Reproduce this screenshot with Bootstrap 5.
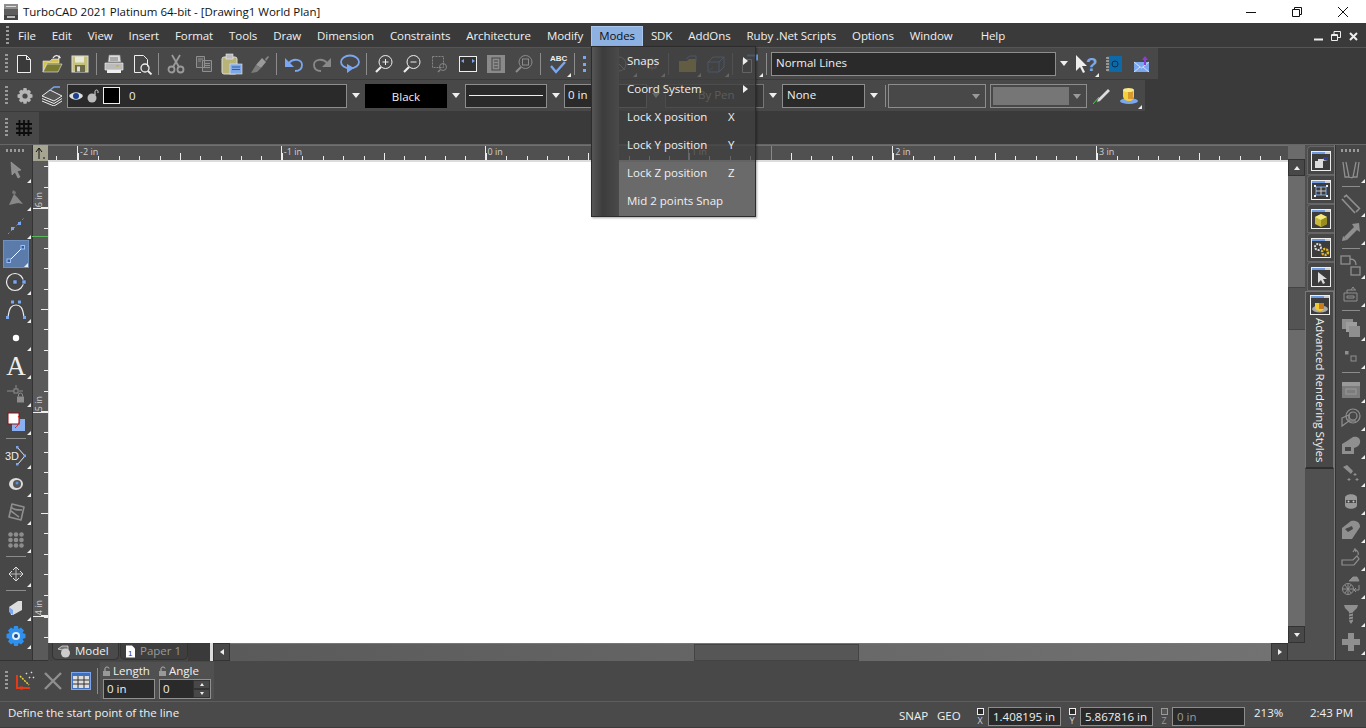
<!DOCTYPE html>
<html lang="en">
<head>
<meta charset="UTF-8" />
<meta name="viewport" content="width=device-width, initial-scale=1" />
<title>TurboCAD 2021 Platinum 64-bit</title>
<link href="https://cdn.jsdelivr.net/npm/bootstrap@5.3.3/dist/css/bootstrap.min.css" rel="stylesheet" />
<style>
  html, body { height: 728px; overflow: hidden; }
  body { width: 1366px; background: #3a3a3a; color: #f0f0f0; font: 11.5px/1.2 "Open Sans", "Noto Sans", sans-serif; }
  svg { display: block; }

  /* window chrome */
  .tc-title { height: 23px; background: #fff; color: #111; padding-left: 4px; }
  .tc-title span { margin: 1px 0 0 5px; letter-spacing: -.03px; }
  .tc-winbtn { width: 46px; height: 23px; }
  .tc-menubar { height: 24px; background: #3a3a3a; padding: 2px 0 0 6px; }
  .tc-menuitem { padding: 0 8px; height: 20px; line-height: 19px; letter-spacing: -.1px; }
  .tc-menuitem.on { background: #8db2e2; color: #111; border: 1px solid #a9c6ec; border-bottom: 0; line-height: 18px; padding: 0 7px; }
  .tc-menuitem.tc-help { margin-left: 12px; }
  .tc-grip { width: 3px; height: 20px; margin: 0 2px 0 5px; flex: none; background: repeating-linear-gradient(#9a9a9a 0 2px, transparent 2px 4px); }
  .tc-menubar .tc-grip { margin: 0 1px 0 0; }

  /* toolbars */
  .tc-rows { height: 97px; border-top: 1px solid #555; }
  .tc-tb { height: 32px; background: #484848; padding-right: 1px; flex: none; border-bottom: 1px solid #3a3a3a; }
  .tc-b { width: 28px; height: 28px; flex: none; position: relative; display: flex; align-items: center; justify-content: center; }
  .tc-c::after { content: ""; position: absolute; right: 1px; bottom: 1px; border: 2px solid transparent; border-right-color: #eee; border-bottom-color: #eee; }
  .tc-sep { width: 6px; height: 26px; flex: none; position: relative; }
  .tc-sep::after { content: ""; position: absolute; left: 2px; top: 2px; bottom: 2px; width: 1px; background: #8c8c8c; }
  .tc-cb { height: 24px; background: #2a2a2a; border: 1px solid #8d8d8d; line-height: 20px; padding: 0 4px; flex: none; white-space: nowrap; }
  .tc-arrow { width: 18px; flex: none; display: flex; justify-content: center; }
  .tc-arrow::after { content: ""; border: 4px solid transparent; border-top: 5px solid #eee; border-bottom: 0; }
  .tc-arrow.dim::after { border-top-color: #9a9a9a; }
  .tc-t3 { height: 32px; width: 39px; background: #484848; }

  /* work area */
  .tc-left { width: 33px; flex: none; background: #474747; border-right: 1px solid #333; padding-top: 4px; }
  .tc-hgrip { height: 3px; width: 20px; margin: 0 auto 0; background: repeating-linear-gradient(90deg, #9a9a9a 0 2px, transparent 2px 4px); flex: none; }
  .tc-left .tc-b, .tc-rtb .tc-b { width: 100%; }
  .tc-hsep { height: 6px; flex: none; position: relative; }
  .tc-hsep::after { content: ""; position: absolute; left: 6px; right: 6px; top: 2px; height: 1px; background: #8c8c8c; }
  .tc-active { background: #5b7cab; outline: 1px solid #6f8fbd; outline-offset: -1px; margin: 0 3px 0 3px; width: 26px !important; }
  .tc-vruler { width: 15px; flex: none; background: #5a5a5a; color: #d0d0d0; font-size: 9px; }
  .tc-vcell { flex: none; position: relative; display: flex; align-items: flex-end; border-bottom: 1px solid #eee; background: repeating-linear-gradient(to top, #eee 0 1px, transparent 1px 20.38px) right bottom / 4px 100% no-repeat, repeating-linear-gradient(to top, #eee 0 1px, transparent 1px 101.9px) right bottom / 7px 100% no-repeat; }
  .tc-vcell span { writing-mode: vertical-rl; transform: rotate(180deg); margin: 0 0 1px 1px; line-height: 10px; }
  .tc-vcell.last { border-bottom: 0; background: repeating-linear-gradient(#eee 0 1px, transparent 1px 20.38px) right top / 4px 100% no-repeat; }
  .tc-corner { height: 16px; flex: none; background: #a5a592; color: #111; position: relative; }
  .tc-hruler { height: 16px; background: #505050; color: #d0d0d0; font-size: 9px; border-top: 1px solid #707070; border-bottom: 1px solid #ddd; position: relative; }
  .tc-hcell { flex: none; width: 203.8px; height: 100%; padding-left: 2px; line-height: 12px; border-left: 1px solid #eee; background: repeating-linear-gradient(90deg, #eee 0 1px, transparent 1px 20.38px) left bottom / 100% 4px no-repeat, repeating-linear-gradient(90deg, #eee 0 1px, transparent 1px 101.9px) left bottom / 100% 7px no-repeat; }
  .tc-hcell.first { width: 29px; padding: 0; border: 0; background: repeating-linear-gradient(270deg, transparent 0 20.37px, #eee 20.37px 21.37px) right bottom / 100% 4px no-repeat; }
  .tc-green-x { position: absolute; left: 723px; top: 0; bottom: 0; width: 1px; background: #5aa85a; }
  .tc-green-y { position: absolute; left: -1px; right: 0; top: 75px; height: 1px; background: #5ab85a; }
  .tc-canvas { background: #fff; border: 1px solid #ddd; border-width: 1px 0 0 1px; }
  .tc-vbar { width: 18px; flex: none; background: #6b6b6b; padding-top: 14px; }
  .tc-vfoot { height: 17px; flex: none; background: #505050; }
  .tc-sb { height: 17px; width: 17px; flex: none; background: #484848; border: 1px solid #333; display: flex; align-items: center; justify-content: center; }
  .tc-up { border: 3px solid transparent; border-bottom: 4px solid #eee; border-top: 0; }
  .tc-dn { border: 3px solid transparent; border-top: 4px solid #eee; border-bottom: 0; }
  .tc-lf { border: 3px solid transparent; border-right: 4px solid #eee; border-left: 0; }
  .tc-rt { border: 3px solid transparent; border-left: 4px solid #eee; border-right: 0; }
  .tc-vthumb { height: 43px; background: #545454; border: 1px solid #444; margin-top: 111px; }
  .tc-tabs { width: 30px; flex: none; background: #505050; border-right: 1px solid #777; padding-top: 1px; margin-left: -1px; }
  .tc-tab { height: 29px; flex: none; background: #474747; border: 1px solid #666; border-right: 0; border-radius: 4px 0 0 0; margin-left: 2px; display: flex; align-items: center; justify-content: center; }
  .tc-tab-on { height: 178px; flex: none; background: #484848; border: 1px solid #777; border-bottom: 2px solid #2f2f2f; padding-top: 3px; }
  .tc-tab-on b { font-weight: 400; writing-mode: vertical-rl; white-space: nowrap; margin: 3px auto 0 auto; color: #f0f0f0; line-height: 14px; }
  .tc-win { width: 20px; height: 20px; border: 1px solid #eee; background: #3c3c3c; position: relative; margin: 0 auto; overflow: hidden; flex: none; }
  .tc-win::before { content: ""; display: block; height: 2px; background: #6f9be0; border-right: 5px solid #ccc; }
  .tc-rtb { width: 31px; flex: none; background: #474747; padding-top: 4px; border-left: 1px solid #333; }

  /* bottom strip */
  .tc-tabrow { height: 18px; background: #444; }
  .tc-sheet { height: 17px; padding: 0 4px; flex: none; border: 1px solid #333; border-top: 0; border-radius: 0 0 5px 5px; line-height: 16px; background: #484848; }
  .tc-sheet.off { color: #999; background: #3e3e3e; }
  .tc-htrack { background: linear-gradient(90deg, #5a5a5a, #727272); height: 18px; border-top: 1px solid #777; }
  .tc-hthumb { width: 165px; height: 17px; flex: none; background: #565656; border: 1px solid #444; margin-left: 464px; }
  .tc-cmd { height: 41px; background: #484848; border-top: 1px solid #333; }
  .tc-panel { background: #505050; padding: 2px 3px 0; height: 37px; margin-bottom: 1px; }
  .tc-lab { line-height: 13px; height: 15px; }
  .tc-lock { display: inline-block; vertical-align: -1px; margin-right: 1px; }
  .tc-in { background: #2a2a2a; border: 1px solid #909090; height: 20px; line-height: 18px; padding: 0 3px; width: 52px; }
  .tc-spin { width: 17px; height: 18px; }
  .tc-spin i { display: flex; flex: 1; align-items: center; justify-content: center; background: #484848; border: 1px solid #333; }
  .tc-status { height: 26px; background: #4a4a4a; border-top: 1px solid #5e5e5e; padding-left: 8px; }
  .tc-status-msg { margin-top: -3px; }
  .tc-st-in { background: #2a2a2a; border: 1px solid #8d8d8d; height: 19px; line-height: 17px; padding: 0 4px; width: 73px; flex: none; white-space: nowrap; }
  .tc-check { width: 16px; flex: none; text-align: center; font-size: 9px; line-height: 9px; color: #ccc; }
  .tc-check::before { content: ""; display: block; width: 7px; height: 7px; border: 1px solid #eee; margin: 0 auto 1px; background: #2a2a2a; }
  .tc-check.dim { color: #999; }
  .tc-check.dim::before { border-color: #999; background: #555; }

  /* open Modes menu, lies over the toolbars */
  .tc-dd { left: 591px; top: 46px; width: 165px; height: 171px; background: rgba(64,64,64,.78); border: 1px solid #2c2c2c; box-shadow: 1px 1px 2px rgba(0,0,0,.35); z-index: 5; }
  .tc-dd-gut { width: 27px; flex: none; background: linear-gradient(90deg, #565656, #3c3c3c 40%, #4a4a4a); }
  .tc-dd-row { height: 28px; line-height: 28px; padding-left: 8px; position: relative; white-space: nowrap; }
  .tc-key { position: absolute; left: 109px; top: 0; }
  .tc-more { position: absolute; left: 124px; top: 10px; border: 4px solid transparent; border-left: 5px solid #eee; border-right: 0; }
</style>
</head>
<body class="position-relative">

<!-- title bar -->
<div class="tc-title d-flex align-items-center">
  <svg width="14" height="16" viewBox="0 0 14 16"><rect width="14" height="16" fill="#8d8d8d"/><rect y="5" width="14" height="6" fill="#5d5d5d"/><rect y="11" width="14" height="5" fill="#444"/><rect x="3" y="12" width="8" height="2" fill="#bbb"/><rect x="2" y="2" width="10" height="1" fill="#ddd"/></svg>
  <span>TurboCAD 2021 Platinum 64-bit - [Drawing1 World Plan]</span>
  <div class="ms-auto d-flex">
    <div class="tc-winbtn d-flex align-items-center justify-content-center"><svg width="12" height="12" viewBox="0 0 12 12"><path d="M1 6.5h10" stroke="#111"/></svg></div>
    <div class="tc-winbtn d-flex align-items-center justify-content-center"><svg width="12" height="12" viewBox="0 0 12 12" fill="none" stroke="#111"><path d="M1.5 3.5h7v7h-7zM3.5 3V1.5h7v7H9"/></svg></div>
    <div class="tc-winbtn d-flex align-items-center justify-content-center"><svg width="12" height="12" viewBox="0 0 12 12"><path d="M1 1l10 10M11 1L1 11" stroke="#111"/></svg></div>
  </div>
</div>

<!-- menu bar -->
<div class="tc-menubar d-flex align-items-center">
  <div class="tc-grip"></div>
  <div class="tc-menuitem">File</div><div class="tc-menuitem">Edit</div><div class="tc-menuitem">View</div><div class="tc-menuitem">Insert</div><div class="tc-menuitem">Format</div><div class="tc-menuitem">Tools</div><div class="tc-menuitem">Draw</div><div class="tc-menuitem">Dimension</div><div class="tc-menuitem">Constraints</div><div class="tc-menuitem">Architecture</div><div class="tc-menuitem">Modify</div><div class="tc-menuitem on">Modes</div><div class="tc-menuitem">SDK</div><div class="tc-menuitem">AddOns</div><div class="tc-menuitem">Ruby .Net Scripts</div><div class="tc-menuitem">Options</div><div class="tc-menuitem">Window</div><div class="tc-menuitem tc-help">Help</div>
  <div class="ms-auto d-flex align-items-center gap-2 pe-2">
    <svg width="9" height="9" viewBox="0 0 9 9"><path d="M0 7.5h9" stroke="#eee" stroke-width="2"/></svg>
    <svg width="10" height="10" viewBox="0 0 10 10" fill="none" stroke="#eee"><path d="M.5 3.5h6v6h-6zM.5 4.5h6M3 3V.5h6.5v6H7"/></svg>
    <svg width="9" height="9" viewBox="0 0 9 9"><path d="M1 1l7 7M8 1L1 8" stroke="#eee" stroke-width="2"/></svg>
  </div>
</div>

<!-- toolbars -->
<div class="tc-rows d-flex flex-column">
  <div class="tc-tb d-flex align-items-center align-self-start" style="width:1158px">
    <div class="tc-grip"></div>
    <div class="tc-b"><svg width="20" height="20" viewBox="0 0 20 20" fill="#3a3a3a" stroke="#eee"><path d="M3.5 1.5h9l4 4v13h-13zM12.5 1.5v4h4"/></svg></div>
    <div class="tc-b"><svg width="22" height="22" viewBox="0 0 22 22"><path d="M2 8h7l2-2h7v4H6L2 19z" fill="#d8c44a" stroke="#eee" stroke-width=".6"/><path d="M6 11h15l-4 8H2z" fill="#7a7a30" stroke="#eee" stroke-width=".6"/><path d="M12 5c2-3 5-3 6-1" fill="none" stroke="#eee" stroke-width="1.3"/><path d="M20 5l-3 1 1-4z" fill="#eee"/></svg></div>
    <div class="tc-b"><svg width="18" height="18" viewBox="0 0 18 18"><rect x="1" y="1" width="16" height="16" fill="#c5c07a" stroke="#ddd"/><rect x="4" y="1.500" width="9" height="6" fill="#e8e8d8"/><rect x="4" y="10" width="10" height="7" fill="#6b6b4a"/><rect x="6" y="11.500" width="3" height="5" fill="#ddd"/></svg></div>
    <div class="tc-sep"></div>
    <div class="tc-b"><svg width="20" height="20" viewBox="0 0 20 20"><path d="M5 1h11l1 7H4z" fill="#ddd" stroke="#777" stroke-width=".6"/><path d="M1 9h18v7H1z" fill="#bbb" stroke="#eee" stroke-width=".7"/><path d="M3 16h14v3H3z" fill="#eee"/><path d="M6 4h8M6 6h8" stroke="#777"/><rect x="12" y="11" width="3" height="1.500" fill="#c8b040"/></svg></div>
    <div class="tc-b"><svg width="22" height="22" viewBox="0 0 22 22" fill="none" stroke="#eee"><path d="M3.500 2.500h9l4 4v7M10 19.500H3.500v-17"/><circle cx="14" cy="15" r="4" stroke-width="1.300"/><path d="M17 18l3.500 3.500" stroke-width="1.800"/></svg></div>
    <div class="tc-sep"></div>
    <div class="tc-b"><svg width="18" height="20" viewBox="0 0 18 20" fill="none" stroke="#9a9a9a"><circle cx="4.500" cy="15.500" r="3" stroke-width="1.800"/><circle cx="13.500" cy="15.500" r="3" stroke-width="1.800"/><path d="M6 13L13 1M12 13L5 1" stroke-width="1.800"/></svg></div>
    <div class="tc-b"><svg width="18" height="18" viewBox="0 0 18 18" fill="#555" stroke="#8f8f8f"><path d="M1.500 1.500h8v11h-8zM7.500 5.500h9v11h-9z"/><path d="M9 8.500h6M9 10.500h6M9 12.500h6M3 4h5M3 6h3" fill="none"/></svg></div>
    <div class="tc-b"><svg width="22" height="22" viewBox="0 0 22 22"><rect x="1" y="4" width="15" height="17" rx="2" fill="#b8b478" stroke="#ddd"/><rect x="5" y="1" width="7" height="5" fill="#bbb" stroke="#eee" stroke-width=".6"/><rect x="9" y="11" width="12" height="10" fill="#7fa8e8" stroke="#eee" stroke-width=".6"/><path d="M11 14h8M11 16.500h8" stroke="#2f5f9f"/></svg></div>
    <div class="tc-b"><svg width="20" height="20" viewBox="0 0 20 20"><path d="M12 4l4 4-5 6-5-3z" fill="#9a9a9a"/><path d="M15 5l3-3 1 1-3 4z" fill="#888"/><path d="M6 11l5 3-4 4-6 1z" fill="#7c7c7c"/></svg></div>
    <div class="tc-sep"></div>
    <div class="tc-b"><svg width="20" height="18" viewBox="0 0 20 18" fill="none"><path d="M5 8c4-5 13-4 13 2 0 4-3 6-7 6" stroke="#7aa7ef" stroke-width="1.800"/><path d="M1 3l0 9 9 0z" fill="#7aa7ef"/></svg></div>
    <div class="tc-b"><svg width="20" height="18" viewBox="0 0 20 18" fill="none"><path d="M15 8C11 3 2 4 2 10c0 4 3 6 7 6" stroke="#888" stroke-width="1.800"/><path d="M19 3l0 9-9 0z" fill="#888"/></svg></div>
    <div class="tc-b"><svg width="22" height="20" viewBox="0 0 22 20" fill="none"><ellipse cx="11" cy="8" rx="9" ry="6.500" stroke="#7aa7ef" stroke-width="1.800"/><path d="M8 10v9l7-5z" fill="#7aa7ef"/></svg></div>
    <div class="tc-sep"></div>
    <div class="tc-b"><svg width="20" height="20" viewBox="0 0 20 20" fill="none" stroke="#eee"><circle cx="11.500" cy="8" r="6.500"/><path d="M8.500 8h6M11.500 5v6"/><path d="M7 13l-5 5" stroke-width="2.200"/></svg></div>
    <div class="tc-b"><svg width="20" height="20" viewBox="0 0 20 20" fill="none" stroke="#eee"><circle cx="11.500" cy="8" r="6.500"/><path d="M8.500 8h6"/><path d="M7 13l-5 5" stroke-width="2.200"/></svg></div>
    <div class="tc-b"><svg width="18" height="18" viewBox="0 0 18 18" fill="none" stroke="#858585"><path d="M1.500 1.500h11v11h-11z" stroke-dasharray="2 1"/><circle cx="12" cy="12" r="3.500"/><path d="M9 15l-2 2" stroke-width="1.500"/></svg></div>
    <div class="tc-b"><svg width="18" height="16" viewBox="0 0 18 16"><rect x=".5" y=".5" width="17" height="15" fill="#333" stroke="#eee"/><path d="M2 5l3-2v4zM16 5l-3-2v4z" fill="#7aa7ef"/></svg></div>
    <div class="tc-b"><svg width="18" height="18" viewBox="0 0 18 18"><rect width="18" height="18" fill="#8a8a8a"/><rect x="5" y="3" width="8" height="12" fill="none" stroke="#444"/><path d="M7 6h4M7 9h4M7 12h4" stroke="#444"/></svg></div>
    <div class="tc-b"><svg width="20" height="20" viewBox="0 0 20 20" fill="none" stroke="#8c8c8c"><circle cx="11.500" cy="8" r="6.500"/><rect x="8.500" y="5" width="6" height="6"/><path d="M7 13l-5 5" stroke-width="2"/></svg></div>
    <div class="tc-sep"></div>
    <div class="tc-b tc-c"><svg width="20" height="22" viewBox="0 0 20 22"><text x="2" y="8" font-size="8" font-weight="700" font-family="Liberation Sans" fill="#eee">ABC</text><path d="M3 13l5 6 9-10" fill="none" stroke="#7aa7ef" stroke-width="2.400"/></svg></div>
    <div class="tc-sep"></div>
    <div class="tc-b" style="width:22px"><svg width="14" height="20" viewBox="0 0 14 20" fill="#7aa7ef"><rect x="1" y="2" width="3" height="3"/><rect x="10" y="2" width="3" height="3"/><rect x="1" y="9" width="3" height="3"/><rect x="1" y="15" width="3" height="3"/><rect x="10" y="15" width="3" height="3"/></svg></div>
    <div class="tc-b tc-c" style="width:38px"><svg width="20" height="20" viewBox="0 0 20 20" fill="none" stroke="#bbb"><circle cx="10" cy="10" r="7"/><path d="M4 4l12 12"/></svg></div>
    <div class="tc-b tc-c"><svg width="20" height="20" viewBox="0 0 20 20" fill="none" stroke="#d55"><path d="M3 10h14M10 3v14"/><rect x="6" y="6" width="8" height="8" stroke="#bbb"/></svg></div>
    <div class="tc-sep" style="width:8px"></div>
    <div class="tc-b tc-c"><svg width="20" height="20" viewBox="0 0 20 20"><path d="M1 7h8l2-2h7v13H1z" fill="#d8c44a"/><path d="M8 5l4-3h6v6" fill="none" stroke="#7aa7ef"/></svg></div>
    <div class="tc-b tc-c"><svg width="20" height="20" viewBox="0 0 20 20" fill="none" stroke="#7aa7ef"><path d="M2 8l5-5h11v10l-5 5H2zM2 8h11v10M13 8l5-5"/><path d="M2 18l5-5" stroke="#d55"/></svg></div>
    <div class="tc-sep"></div>
    <div class="tc-b tc-c"><svg width="18" height="20" viewBox="0 0 18 20" fill="none" stroke="#ddd"><path d="M1.500 5.500h9v13h-9z"/><path d="M6 1.500h10v5" stroke="#7aa7ef" stroke-width="2"/></svg></div>
    <div class="tc-sep"></div>
    <div class="tc-cb" style="width:285px;margin-left:1px">Normal Lines</div>
    <div class="tc-arrow" style="width:16px"></div>
    <div class="tc-b tc-c"><svg width="24" height="22" viewBox="0 0 24 22"><path d="M2 2v16l4-4 3 6 2-1-3-6h5z" fill="#eee"/><text x="12" y="17.500" font-size="19" font-weight="700" font-family="Liberation Sans" fill="#7aa7ef">?</text></svg></div>
    <div class="tc-b"><svg width="18" height="18" viewBox="0 0 18 18"><rect x="2" y="1" width="15" height="16" fill="#0d6aa8"/><rect x="2" y="1" width="3" height="16" fill="#555"/><circle cx="10" cy="9" r="3" fill="none" stroke="#042f4f"/><path d="M1 3h3M1 6h3M1 9h3M1 12h3M1 15h3" stroke="#ddd"/></svg></div>
    <div class="tc-b"><svg width="18" height="18" viewBox="0 0 18 18"><path d="M1 7h15v10H1z" fill="#7aa7ef"/><path d="M1 7l7.500 6L16 7M1 17l6-5M16 17l-6-5" fill="none" stroke="#eee" stroke-width=".8"/><path d="M12 1l3 4h-2v5h-2V5H9z" fill="#8a3fd0"/></svg></div>
  </div>

  <div class="tc-tb d-flex align-items-center align-self-start" style="width:1145px">
    <div class="tc-grip" style="margin-right:4px"></div>
    <div class="tc-b" style="width:26px"><svg width="18" height="18" viewBox="0 0 18 18"><path d="M7.500 1h3l.5 2.500 2-.8 2 2-1 2 2.500.8v3l-2.500.8 1 2-2 2-2-1-.5 2.500h-3L7 14.500l-2 1-2-2 1-2L1.500 10.500v-3L4 6.700l-1-2 2-2 2 .8z" fill="#b5b5b5"/><circle cx="9" cy="9" r="2.600" fill="#484848"/></svg></div>
    <div class="tc-b"><svg width="22" height="20" viewBox="0 0 22 20" fill="#555" stroke="#eee"><path d="M1 10l8-6 12 6-8 5z"/><path d="M1 12.500l12 5 8-5M1 15l12 5 8-5" fill="none"/><path d="M9 4l4-3h6" fill="none" stroke="#7aa7ef" stroke-width="1.500"/></svg></div>
    <div class="tc-cb d-flex align-items-center" style="width:280px;padding-left:1px;margin-left:1px">
      <svg width="14" height="12" viewBox="0 0 14 12"><path d="M0 6c3-5 11-5 14 0-3 5-11 5-14 0z" fill="#ddd"/><circle cx="7" cy="6" r="3" fill="#1c3f8f"/></svg>
      <svg class="ms-1" width="12" height="14" viewBox="0 0 12 14"><circle cx="5" cy="9" r="4.500" fill="#bbb"/><path d="M8 6V2.500C8 .5 11 .5 11 2.500V4" fill="none" stroke="#ddd"/></svg>
      <span class="d-block ms-1" style="width:17px;height:17px;background:#000;border:1px solid #eee"></span>
      <span style="margin:1px 0 0 9px;color:#eee">0</span>
    </div>
    <div class="tc-arrow"></div>
    <div class="tc-cb text-center" style="width:82px;background:#000;border-color:#000;padding-top:2px">Black</div>
    <div class="tc-arrow"></div>
    <div class="tc-cb d-flex align-items-center" style="width:82px;padding:0 3px"><span class="d-block w-100" style="height:1px;background:#eee"></span></div>
    <div class="tc-arrow"></div>
    <div class="tc-cb" style="width:83px;padding-left:3px;margin-left:-1px">0 in</div>
    <div class="tc-arrow"></div>
    <div class="tc-cb" style="width:99px;padding-left:32px;color:#bbb;background:#3a3a3a;border-color:#777">By Pen</div>
    <div class="tc-arrow"></div>
    <div class="tc-cb" style="width:83px">None</div>
    <div class="tc-arrow"></div>
    <div class="tc-sep" style="width:5px"></div>
    <div class="tc-cb" style="width:98px;background:#484848;position:relative"><span class="tc-arrow dim position-absolute" style="right:0;top:9px"></span></div>
    <div class="tc-cb p-0 ms-1 d-flex align-items-center" style="width:97px;background:#484848;position:relative"><span class="d-block" style="width:76px;height:18px;background:#767676;margin-left:2px"></span><span class="tc-arrow dim position-absolute" style="right:0;top:9px"></span></div>
    <div class="tc-b"><svg width="20" height="20" viewBox="0 0 20 20"><path d="M2 18L8 11" stroke="#3fd03f"/><path d="M7 13l10-10 2 2-10 10-3 1z" fill="#ddd" stroke="#888" stroke-width=".5"/></svg></div>
    <div class="tc-b tc-c"><svg width="20" height="18" viewBox="0 0 20 18"><ellipse cx="10" cy="14" rx="9" ry="3" fill="#7aa7ef"/><path d="M4 3h11v6c0 3-2 5-5 5s-6-2-6-5z" fill="#f2d040"/><path d="M9 4h5v8H9z" fill="#d99a2c"/><ellipse cx="9.500" cy="3" rx="5.500" ry="2" fill="#f8e888"/></svg></div>
  </div>

  <div class="tc-t3 d-flex align-items-center">
    <div class="tc-grip" style="margin-right:4px"></div>
    <div class="tc-b" style="width:24px"><svg width="18" height="18" viewBox="0 0 18 18" stroke="#0c0c0c" stroke-width="1.800"><path d="M1 5h16M1 9.500h16M1 14h16M4.500 1v16M9 1v16M13.500 1v16"/></svg></div>
  </div>
</div>

<!-- work area -->
<div class="d-flex" style="height:516px;border-top:1px solid #666">
  <div class="tc-left d-flex flex-column">
    <div class="tc-hgrip mb-1"></div>
    <div class="tc-b tc-c"><svg width="16" height="18" viewBox="0 0 16 18"><path d="M3 1l1 13 3-3 3 6 2-1-3-6 4-1z" fill="#8d8d8d" stroke="#aaa" stroke-width=".5"/></svg></div>
    <div class="tc-b tc-c"><svg width="18" height="20" viewBox="0 0 18 20"><path d="M2 17L7 6l3 3 6 7-5-1z" fill="#888"/><path d="M6 2l3 2-1 3-3-2z" fill="#777"/></svg></div>
    <div class="tc-b tc-c"><svg width="20" height="20" viewBox="0 0 20 20"><path d="M2 18L18 2" stroke="#8d8d8d" stroke-dasharray="2 2"/><rect x="5" y="11" width="3" height="3" fill="#7aa7ef"/><rect x="12" y="6" width="3" height="3" fill="#7aa7ef"/></svg></div>
    <div class="tc-b tc-c tc-active"><svg width="22" height="22" viewBox="0 0 22 22"><path d="M4 18L18 4" stroke="#fff"/><rect x="2" y="16" width="3.500" height="3.500" fill="#2d5fa6" stroke="#9fc2f5"/><rect x="16" y="2.500" width="3.500" height="3.500" fill="#2d5fa6" stroke="#9fc2f5"/></svg></div>
    <div class="tc-b tc-c"><svg width="22" height="22" viewBox="0 0 22 22" fill="none"><circle cx="10" cy="11" r="8.500" stroke="#eee" stroke-width="1.200"/><rect x="8" y="9" width="4" height="4" fill="#7aa7ef" stroke="#333" stroke-width=".5"/><rect x="17" y="9" width="4" height="4" fill="#7aa7ef" stroke="#333" stroke-width=".5"/></svg></div>
    <div class="tc-b tc-c"><svg width="22" height="22" viewBox="0 0 22 22" fill="none"><path d="M3 19C4 8 7 6 11 6s7 2 8 13" stroke="#eee" stroke-width="1.200"/><rect x="6" y="1.500" width="3" height="3" fill="#7aa7ef"/><rect x="13" y="1.500" width="3" height="3" fill="#7aa7ef"/><rect x="1" y="17" width="3" height="3" fill="#7aa7ef"/><rect x="18" y="17" width="3" height="3" fill="#7aa7ef"/></svg></div>
    <div class="tc-b tc-c"><svg width="8" height="8" viewBox="0 0 8 8"><circle cx="4" cy="4" r="3.200" fill="#fff"/></svg></div>
    <div class="tc-b tc-c"><span style="font:400 27px/24px 'Liberation Serif',serif;color:#eee">A</span></div>
    <div class="tc-b tc-c"><svg width="20" height="20" viewBox="0 0 20 20"><path d="M1 7h7M13 7h4M10 1v4" stroke="#8d8d8d"/><rect x="8" y="5" width="4" height="4" fill="none" stroke="#8d8d8d"/><path d="M11 12.500h7v6h-7z" fill="#8d8d8d"/><path d="M12.500 12.500v-1.500a2 2 0 0 1 4 0v1.500" fill="none" stroke="#8d8d8d"/></svg></div>
    <div class="tc-b tc-c"><svg width="20" height="20" viewBox="0 0 20 20"><rect x="6" y="7" width="13" height="12" fill="#8ab0f4"/><rect x="2" y="1" width="11" height="11" fill="#fff" stroke="#8c1010"/><path d="M12 4c3 3 2 8-3 12" fill="none" stroke="#e02020"/></svg></div>
    <div class="tc-hsep"></div>
    <div class="tc-b tc-c"><svg width="22" height="20" viewBox="0 0 22 20"><path d="M12 1l8 9-8 9" fill="none" stroke="#eee"/><rect x="11" y="0" width="2.500" height="2.500" fill="#7aa7ef"/><rect x="11" y="17" width="2.500" height="2.500" fill="#7aa7ef"/><rect x="18.500" y="8.500" width="2.500" height="2.500" fill="#7aa7ef"/><text x="0" y="14" font-size="11" font-family="Liberation Sans" fill="#eee">3D</text></svg></div>
    <div class="tc-b tc-c"><svg width="16" height="14" viewBox="0 0 16 14"><ellipse cx="8" cy="7" rx="7" ry="6" fill="#ddd"/><ellipse cx="9" cy="7" rx="4" ry="4" fill="#555"/><circle cx="9" cy="6" r="1.500" fill="#5a8fe0"/></svg></div>
    <div class="tc-b tc-c"><svg width="20" height="20" viewBox="0 0 20 20" fill="none" stroke="#8f8f8f" stroke-width="1.600"><path d="M6 2l12 3-3 13-12-3z" stroke-linejoin="round"/><path d="M5 5c3 3 6 3 11 3M5 9c3 2 5 4 8 6"/></svg></div>
    <div class="tc-b tc-c"><svg width="16" height="16" viewBox="0 0 16 16" fill="#8d8d8d"><circle cx="2.500" cy="2.500" r="2.300"/><circle cx="8" cy="2.500" r="2.300"/><circle cx="13.500" cy="2.500" r="2.300"/><circle cx="2.500" cy="8" r="2.300"/><circle cx="8" cy="8" r="2.300"/><circle cx="13.500" cy="8" r="2.300"/><circle cx="2.500" cy="13.500" r="2.300"/><circle cx="8" cy="13.500" r="2.300"/><circle cx="13.500" cy="13.500" r="2.300"/></svg></div>
    <div class="tc-hsep"></div>
    <div class="tc-b tc-c"><svg width="18" height="18" viewBox="0 0 18 18" fill="none" stroke="#bbb"><path d="M2 9h14M9 2v14"/><path d="M5 6l-3 3 3 3M13 6l3 3-3 3M6 5l3-3 3 3M6 13l3 3 3-3" stroke="#ddd"/></svg></div>
    <div class="tc-hsep"></div>
    <div class="tc-b tc-c"><svg width="16" height="18" viewBox="0 0 16 18"><path d="M1 8l9-6h4v9l-9 5H3z" fill="#ddd"/><path d="M1 8l4 3v5l-4-3z" fill="#7aa7ef"/></svg></div>
    <div class="tc-b tc-c"><svg width="20" height="20" viewBox="0 0 20 20"><path d="M8 0h4l.5 3 2.500-1.500 3 3L16.500 7l3 1v4l-3 1 1.500 2.500-3 3L12.500 17 12 20H8l-.5-3L5 18.500l-3-3L3.500 13l-3-1V8l3-1L2 4.500l3-3L7.500 3z" fill="#2f90ee"/><circle cx="10" cy="10" r="4" fill="#dff0ff"/><circle cx="10" cy="10" r="2" fill="#1d4a90"/></svg></div>
  </div>

  <div class="tc-vruler d-flex flex-column">
    <div class="tc-corner d-flex align-items-center justify-content-center"><svg width="11" height="12" viewBox="0 0 11 12"><path d="M4 12V2M1 5l3-4 3 4M8 11l2 0" fill="none" stroke="#111"/></svg></div>
    <div class="position-relative d-flex flex-column flex-grow-1">
      <div class="tc-vcell" style="height:48px"><span>6 in</span></div>
      <div class="tc-vcell" style="height:204px"><span>5 in</span></div>
      <div class="tc-vcell" style="height:204px"><span>4 in</span></div>
      <div class="tc-vcell last" style="height:26px"></div>
      <div class="tc-green-y"></div>
    </div>
  </div>

  <div class="d-flex flex-column" style="width:1240px;flex:none">
    <div class="tc-hruler d-flex">
      <div class="tc-hcell first"></div>
      <div class="tc-hcell">-2 in</div><div class="tc-hcell">-1 in</div><div class="tc-hcell">0 in</div><div class="tc-hcell">1 in</div><div class="tc-hcell">2 in</div><div class="tc-hcell">3 in</div>
      <div class="tc-green-x"></div>
    </div>
    <div class="tc-canvas flex-grow-1"></div>
  </div>

  <div class="tc-vbar d-flex flex-column">
    <div class="tc-sb"><i class="tc-up"></i></div>
    <div class="tc-vthumb"></div>
    <div class="tc-sb mt-auto"><i class="tc-dn"></i></div>
    <div class="tc-vfoot"></div>
  </div>

  <div class="tc-tabs d-flex flex-column">
    <div class="tc-tab"><div class="tc-win"><svg width="18" height="16" viewBox="0 0 18 16"><path d="M3 14V7h3V5h5l3-2h2v3l-5 1v7z" fill="#ddd"/><path d="M11 3h5v3h-4z" fill="#2d3fa0"/></svg></div></div>
    <div class="tc-tab"><div class="tc-win"><svg width="18" height="16" viewBox="0 0 18 16" fill="none" stroke="#7aa7ef"><rect x="4" y="4" width="10" height="8"/><path d="M4 8h10M9 4v8" stroke="#ccc"/><path d="M2 2h2v2H2zM14 2h2v2h-2zM2 12h2v2H2zM14 12h2v2h-2z" fill="#eee" stroke="none"/></svg></div></div>
    <div class="tc-tab"><div class="tc-win"><svg width="18" height="16" viewBox="0 0 18 16"><path d="M9 2l6 3v7l-6 3-6-3V5z" fill="#c8b93c"/><path d="M9 2l6 3-6 3-6-3z" fill="#f3ea80"/><path d="M9 8l6-3v7l-6 3z" fill="#9a8d20"/></svg></div></div>
    <div class="tc-tab"><div class="tc-win"><svg width="18" height="16" viewBox="0 0 18 16" fill="none"><circle cx="6" cy="6" r="3" stroke="#ddd" stroke-width="2" stroke-dasharray="2 1"/><circle cx="13" cy="11" r="3" stroke="#e8b820" stroke-width="2.400" stroke-dasharray="2 1"/></svg></div></div>
    <div class="tc-tab"><div class="tc-win"><svg width="18" height="16" viewBox="0 0 18 16"><path d="M6 2v11l3-3 2 4 2-1-2-4h4z" fill="#ddd"/></svg></div></div>
    <div class="tc-tab-on d-flex flex-column">
      <div class="tc-win"><svg width="18" height="16" viewBox="0 0 18 16"><ellipse cx="9" cy="11" rx="8" ry="3.500" fill="#aaa"/><path d="M4 5h9v4c0 3-2 4-4 4S4 12 4 9z" fill="#f0c830"/><path d="M8 5h5v6H8z" fill="#c87a20"/></svg></div>
      <b>Advanced Rendering Styles</b>
    </div>
  </div>

  <div class="tc-rtb d-flex flex-column">
    <div class="tc-hgrip mb-1"></div>
    <div class="tc-b tc-c"><svg width="20" height="20" viewBox="0 0 20 20" fill="none" stroke="#8f8f8f" stroke-width="1.300"><path d="M2 2l2 15h4L5 2M18 2l-2 15h-4l3-15M8 17c2 1 3 1 4 0"/></svg></div>
    <div class="tc-hsep"></div>
    <div class="tc-b tc-c"><svg width="20" height="20" viewBox="0 0 20 20" fill="none" stroke="#8f8f8f" stroke-width="1.700"><path d="M1 5l13 14M5 1l14 14"/><path d="M3 3l3-2M15 18l3-3"/></svg></div>
    <div class="tc-b tc-c"><svg width="20" height="20" viewBox="0 0 20 20" fill="#8f8f8f"><path d="M18 1l1 9-3-2-10 10-3-3L13 5l-2-3z"/><path d="M2 14l4 4-5 1z"/></svg></div>
    <div class="tc-hsep"></div>
    <div class="tc-b tc-c"><svg width="22" height="22" viewBox="0 0 22 22" fill="none" stroke="#8f8f8f" stroke-width="1.300"><rect x="1" y="1" width="9" height="8"/><rect x="11" y="12" width="9" height="8"/><path d="M10 4c4 0 6 2 6 6"/></svg></div>
    <div class="tc-b tc-c"><svg width="18" height="18" viewBox="0 0 18 18" fill="none" stroke="#8f8f8f"><path d="M2 8h13v8H2zM5 8V5h9M5 11h7v2H5z"/><path d="M9 5l2-3 2 3"/></svg></div>
    <div class="tc-hsep"></div>
    <div class="tc-b tc-c"><svg width="20" height="20" viewBox="0 0 20 20" fill="#8f8f8f"><rect x="1" y="1" width="11" height="10"/><rect x="5" y="4" width="11" height="10" fill="#9d9d9d"/><rect x="8" y="8" width="11" height="11"/></svg></div>
    <div class="tc-b tc-c"><svg width="12" height="12" viewBox="0 0 12 12"><rect y="1" width="3.500" height="3.500" fill="#8f8f8f"/><rect x="6" y="6" width="5" height="5" fill="none" stroke="#8f8f8f"/></svg></div>
    <div class="tc-hsep"></div>
    <div class="tc-b tc-c"><svg width="20" height="18" viewBox="0 0 20 18"><rect x="1" y="1" width="18" height="16" fill="#7c7c7c"/><rect x="1" y="1" width="18" height="4" fill="#999"/><rect x="5" y="8" width="10" height="5" fill="none" stroke="#999"/></svg></div>
    <div class="tc-b tc-c"><svg width="20" height="20" viewBox="0 0 20 20" fill="none" stroke="#8f8f8f" stroke-width="1.200"><circle cx="12" cy="8" r="7"/><circle cx="12" cy="8" r="4"/><path d="M1 10l7-3v6l-7 5z"/><path d="M8 13h7"/></svg></div>
    <div class="tc-b tc-c"><svg width="20" height="20" viewBox="0 0 20 20" fill="#8f8f8f"><path d="M6 5l6-4c5-1 8 2 7 6-1 3-3 4-6 5v6H1V8z"/><rect x="4" y="11" width="6" height="4" fill="#474747"/></svg></div>
    <div class="tc-b tc-c"><svg width="20" height="20" viewBox="0 0 20 20" fill="#8f8f8f"><path d="M2 3l4-2 6 6-2 3z"/><path d="M14 9v3M12.500 10.500h3M16 14v3M14.500 15.500h3M8 14v3M6.500 15.500h3" stroke="#8f8f8f"/></svg></div>
    <div class="tc-b tc-c"><svg width="14" height="16" viewBox="0 0 14 16"><path d="M1 4c0-5 12-5 12 0v7c0 5-12 5-12 0z" fill="#999"/><path d="M2 6h10v3H2z" fill="#474747"/><circle cx="4.500" cy="7.500" r="1" fill="#ccc"/><circle cx="9.500" cy="7.500" r="1" fill="#ccc"/></svg></div>
    <div class="tc-b tc-c"><svg width="20" height="20" viewBox="0 0 20 20" fill="#8f8f8f"><path d="M1 8l9-7c5-1 9 1 9 6l-8 12H1z"/><path d="M4 9l7-3 1 3-5 3z" fill="#474747"/></svg></div>
    <div class="tc-b tc-c"><svg width="20" height="20" viewBox="0 0 20 20" fill="none" stroke="#8f8f8f" stroke-width="1.200"><path d="M1 12h11l4-4 2 3-5 6H1zM13 1c3 1 5 3 4 6M12 4l2-3 1 3"/></svg></div>
    <div class="tc-b tc-c"><svg width="20" height="20" viewBox="0 0 20 20" fill="none" stroke="#8f8f8f"><circle cx="7" cy="13" r="5.500"/><path d="M2 13h10M7 8v10M4 9l6 8M10 9l-6 8"/><path d="M8 5l4-4h4l2 4z" fill="#8f8f8f"/><path d="M18 9v5h-5M15 12l-2 2 2 2"/></svg></div>
    <div class="tc-b tc-c"><svg width="16" height="20" viewBox="0 0 16 20" fill="#8f8f8f"><path d="M1 1h14l-1 3-4 4v9l-2 3-2-3V8L2 4z"/><path d="M6 10l4-1M6 13l4-1M6 16l4-1" stroke="#474747"/></svg></div>
    <div class="tc-b tc-c"><svg width="20" height="20" viewBox="0 0 20 20"><path d="M7 1h6v6h6v6h-6v6H7v-6H1V7h6z" fill="#8f8f8f"/></svg></div>
  </div>
</div>

<!-- command strip -->
<div class="tc-cmd d-flex align-items-center">
  <div class="tc-grip" style="margin-right:4px"></div>
  <div class="tc-b" style="margin-left:-1px"><svg width="22" height="22" viewBox="0 0 22 22"><path d="M3 5v13h13" fill="none" stroke="#e53a18" stroke-width="2"/><path d="M6 6l9 9" stroke="#e8d440" stroke-dasharray="2 1" stroke-width="1.500"/><path d="M12 3l1 1M17 2l1 1M19 7l1 1M15 7l1 1" stroke="#ddd" stroke-width="1.500"/><rect x="6" y="16.500" width="3" height="3" fill="#e53a18"/></svg></div>
  <div class="tc-b"><svg width="18" height="18" viewBox="0 0 18 18"><path d="M1 1l16 16M17 1L1 17" stroke="#8f8f8f" stroke-width="2.400"/></svg></div>
  <div class="tc-b"><svg width="20" height="18" viewBox="0 0 20 18"><rect x=".5" y=".5" width="19" height="17" fill="#3f6fc0" stroke="#7aa7ef"/><rect x="2" y="4" width="16" height="12" fill="#ddd"/><path d="M2 8h16M2 12h16M7 4v12M13 4v12" stroke="#333"/></svg></div>
  <div class="tc-sep" style="height:30px;width:5px"></div>
  <div class="tc-panel d-flex gap-1">
    <div>
      <div class="tc-lab"><svg class="tc-lock" width="9" height="10" viewBox="0 0 9 10"><rect y="5" width="7" height="5" fill="#999"/><path d="M2 5V2.500C2 .5 6 .5 6 2.500" fill="none" stroke="#bbb"/></svg>Length</div>
      <div class="tc-in">0 in</div>
    </div>
    <div>
      <div class="tc-lab"><svg class="tc-lock" width="9" height="10" viewBox="0 0 9 10"><rect y="5" width="7" height="5" fill="#999"/><path d="M2 5V2.500C2 .5 6 .5 6 2.500" fill="none" stroke="#bbb"/></svg>Angle</div>
      <div class="tc-in d-flex justify-content-between pe-0">0
        <div class="tc-spin d-flex flex-column">
          <i><span class="tc-up" style="border-width:0 2px 3px"></span></i><i><span class="tc-dn" style="border-width:3px 2px 0"></span></i>
        </div>
      </div>
    </div>
  </div>
</div>

<!-- status bar -->
<div class="tc-status d-flex align-items-center">
  <div class="tc-status-msg">Define the start point of the line</div>
  <div class="ms-auto d-flex align-items-center" style="margin-top:3px;width:467px">
    <span style="width:38px">SNAP</span>
    <span style="width:35px">GEO</span>
    <span class="tc-check">X</span>
    <div class="tc-st-in" style="margin-right:3px">1.408195 in</div>
    <span class="tc-check">Y</span>
    <div class="tc-st-in" style="margin-right:3px">5.867816 in</div>
    <span class="tc-check dim">Z</span>
    <div class="tc-st-in" style="color:#999">0 in</div>
    <span style="margin:-7px 0 0 9px;width:56px">213%</span>
    <span style="margin-top:-7px">2:43 PM</span>
  </div>
</div>

<!-- tabs row overlays the foot of the work area -->
<div class="tc-tabrow d-flex position-absolute" style="left:48px;top:643px;width:1240px">
  <div class="tc-sheet d-flex align-items-center gap-1" style="width:67px;margin-left:4px;background:#4a4a4a"><svg width="14" height="13" viewBox="0 0 14 13"><path d="M1 4l4-3h6v4H5z" fill="#777" stroke="#eee" stroke-width=".7"/><circle cx="8.500" cy="8" r="4.500" fill="#ccc"/></svg>Model</div>
  <div class="tc-sheet off d-flex align-items-center gap-1" style="width:68px;margin-left:1px"><svg width="11" height="13" viewBox="0 0 11 13"><path d="M1 .5h6l3 3v9H1z" fill="#fff"/><text x="3" y="11" font-size="8" fill="#123b9a" font-family="Liberation Sans">1</text></svg>Paper 1</div>
  <div style="width:25px;background:#3a3a3a;border-right:3px solid #ddd;flex:none"></div>
  <div class="tc-sb" style="height:18px"><i class="tc-lf"></i></div>
  <div class="tc-htrack d-flex flex-grow-1"><div class="tc-hthumb"></div></div>
  <div class="tc-sb" style="height:18px"><i class="tc-rt"></i></div>
</div>

<!-- open Modes menu -->
<div class="tc-dd position-absolute d-flex">
  <div class="tc-dd-gut"></div>
  <div class="flex-grow-1 d-flex flex-column">
    <div class="tc-dd-row">Snaps<i class="tc-more"></i></div>
    <div class="tc-dd-row">Coord System<i class="tc-more"></i></div>
    <div class="tc-dd-row">Lock X position<span class="tc-key">X</span></div>
    <div class="tc-dd-row">Lock Y position<span class="tc-key">Y</span></div>
    <div class="tc-dd-row">Lock Z position<span class="tc-key">Z</span></div>
    <div class="tc-dd-row">Mid 2 points Snap</div>
  </div>
</div>

<script src="https://cdn.jsdelivr.net/npm/bootstrap@5.3.3/dist/js/bootstrap.bundle.min.js"></script>
</body>
</html>
